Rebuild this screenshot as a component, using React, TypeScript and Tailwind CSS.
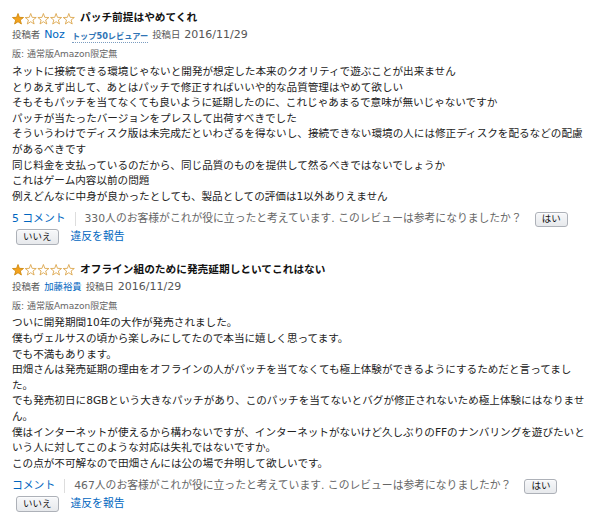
import React from 'react';

type Review = {
  title: string;
  author: string;
  latinAuthor: boolean;
  badge?: string;
  date: string;
  edition: string;
  lines: string[];
  comments: string;
  helpful: number;
};

const reviews: Review[] = [
  {
    title: 'パッチ前提はやめてくれ',
    author: 'Noz',
    latinAuthor: true,
    badge: 'トップ50レビュアー',
    date: '2016/11/29',
    edition: '版: 通常版Amazon限定無',
    lines: [
      'ネットに接続できる環境じゃないと開発が想定した本来のクオリティで遊ぶことが出来ません',
      'とりあえず出して、あとはパッチで修正すればいいや的な品質管理はやめて欲しい',
      'そもそもパッチを当てなくても良いように延期したのに、これじゃあまるで意味が無いじゃないですか',
      'パッチが当たったバージョンをプレスして出荷すべきでした',
      'そういうわけでディスク版は未完成だといわざるを得ないし、接続できない環境の人には修正ディスクを配るなどの配慮',
      'があるべきです',
      '同じ料金を支払っているのだから、同じ品質のものを提供して然るべきではないでしょうか',
      'これはゲーム内容以前の問題',
      '例えどんなに中身が良かったとしても、製品としての評価は1以外ありえません',
    ],
    comments: '5 コメント',
    helpful: 330,
  },
  {
    title: 'オフライン組のために発売延期しといてこれはない',
    author: '加藤裕貴',
    latinAuthor: false,
    date: '2016/11/29',
    edition: '版: 通常版Amazon限定無',
    lines: [
      'ついに開発期間10年の大作が発売されました。',
      '僕もヴェルサスの頃から楽しみにしてたので本当に嬉しく思ってます。',
      'でも不満もあります。',
      '田畑さんは発売延期の理由をオフラインの人がパッチを当てなくても極上体験ができるようにするためだと言ってまし',
      'た。',
      'でも発売初日に8GBという大きなパッチがあり、このパッチを当てないとバグが修正されないため極上体験にはなりませ',
      'ん。',
      '僕はインターネットが使えるから構わないですが、インターネットがないけど久しぶりのFFのナンバリングを遊びたいと',
      'いう人に対してこのような対応は失礼ではないですか。',
      'この点が不可解なので田畑さんには公の場で弁明して欲しいです。',
    ],
    comments: 'コメント',
    helpful: 467,
  },
];

const STAR = '6,0.5 7.41,4.36 11.52,4.51 8.28,7.04 9.41,10.99 6,8.7 2.59,10.99 3.72,7.04 0.48,4.51 4.59,4.36';

function Stars({ count }: { count: number }) {
  return (
    <svg width="64" height="12" viewBox="0 0 64 12">
      {[0, 1, 2, 3, 4].map((i) => (
        <polygon
          key={i}
          points={STAR}
          transform={`translate(${i * 12.7} 0)`}
          fill={i < count ? '#f4a21c' : '#ffffff'}
          stroke={i < count ? '#cf8a12' : '#dca74e'}
          strokeWidth="0.9"
          strokeLinejoin="round"
        />
      ))}
    </svg>
  );
}

function Button({ label, className }: { label: string; className?: string }) {
  return (
    <span
      className={`inline-flex items-center justify-center h-[15px] px-[6px] rounded-[3px] border border-[#adb1b8] bg-linear-to-b from-[#f7f8fa] to-[#e7e9ec] text-[9.5px] text-[#111] shadow-[inset_0_1px_0_rgba(255,255,255,0.6)] ${className ?? ''}`}
    >
      {label}
    </span>
  );
}

function ReviewBlock({ r }: { r: Review }) {
  return (
    <div className="flex flex-col">
      <div className="flex items-center h-[17px] gap-[4px]">
        <Stars count={1} />
        <span className="text-[10.7px] font-bold text-[#111]">{r.title}</span>
      </div>

      <div className="flex items-center h-[17px] text-[#555]">
        <span className="text-[9.4px]">投稿者</span>
        {r.latinAuthor ? (
          <span className="ml-[4px] text-[11px] text-[#0066c0]">{r.author}</span>
        ) : (
          <span className="ml-[4px] text-[9.4px] text-[#0066c0]">{r.author}</span>
        )}
        {r.badge && (
          <span className="ml-[7px] mt-[3px] text-[8.2px] font-bold text-[#2f74b5] border-b border-dotted border-[#7a9cc0] leading-[11px]">
            {r.badge}
          </span>
        )}
        <span className="ml-[4px] text-[9.4px]">投稿日</span>
        <span className="ml-[4px] text-[11px]">{r.date}</span>
      </div>

      <div className="mt-[4px] h-[14px] flex items-center text-[9px] text-[#666]">{r.edition}</div>

      <div className="mt-[2px] text-[10.6px] leading-[15.6px] text-[#222]">
        {r.lines.map((line, i) => (
          <div key={i} className="whitespace-nowrap">
            {line}
          </div>
        ))}
      </div>

      <div className="mt-[6px] flex items-center h-[18px] text-[10.8px]">
        <span className="text-[#0066c0]">{r.comments}</span>
        <span className="mx-[9px] w-px h-[14px] bg-[#dddddd]" />
        <span className="text-[#666]">
          {r.helpful}人のお客様がこれが役に立ったと考えています. このレビューは参考になりましたか？
        </span>
        <Button label="はい" className="ml-[13px]" />
      </div>

      <div className="flex items-center h-[17px] text-[10.8px]">
        <Button label="いいえ" className="ml-[4px] h-[16px]" />
        <span className="ml-[12px] text-[#0066c0]">違反を報告</span>
      </div>
    </div>
  );
}

export default function App() {
  return (
    <div
      className="w-[610px] h-[530px] overflow-hidden bg-white pl-3 pt-[10px] flex flex-col gap-[16px]"
      style={{ fontFamily: '"DejaVu Sans", "Noto Sans CJK JP", sans-serif' }}
    >
      {reviews.map((r, i) => (
        <ReviewBlock key={i} r={r} />
      ))}
    </div>
  );
}
